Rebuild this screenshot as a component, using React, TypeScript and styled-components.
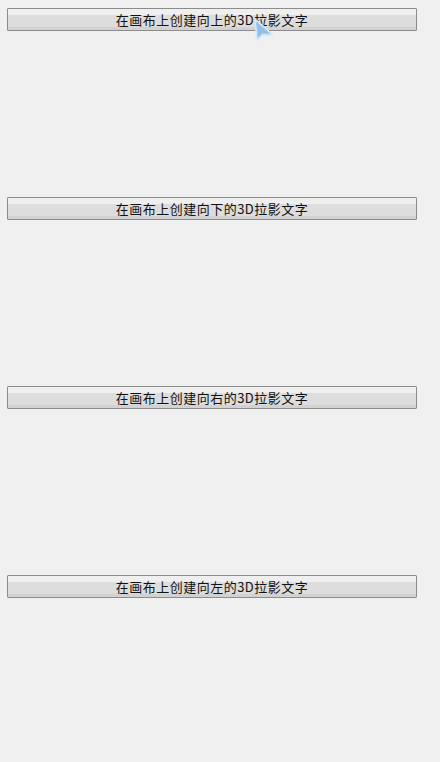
import React from "react";
import styled, { createGlobalStyle } from "styled-components";

const Global = createGlobalStyle`
  html, body { margin: 0; padding: 0; background: #f0f0f0; }
  body { font-family: "Noto Sans CJK SC", "Noto Sans", sans-serif; }
`;

const Page = styled.div`
  position: relative;
  width: 440px;
  height: 762px;
  padding: 8px 0 0 7px;
  box-sizing: border-box;
  display: flex;
  flex-direction: column;
  gap: 166px;
`;

const Button = styled.button`
  width: 410px;
  height: 23px;
  margin: 0;
  padding: 0;
  border: 1px solid #8c8c8c;
  border-radius: 1px;
  background: linear-gradient(
    to bottom,
    #efefef 0px,
    #efefef 6px,
    #dddddd 6px,
    #dddddd 18px,
    #d2d2d2 18px,
    #d2d2d2 21px
  );
  font-family: "Noto Sans CJK SC", "Noto Sans", sans-serif;
  font-size: 13px;
  font-weight: 400;
  line-height: 21px;
  color: #111;
  text-align: center;
  box-sizing: border-box;
  letter-spacing: 0.5px;
`;

const Cursor = styled.svg`
  position: absolute;
  left: 252px;
  top: 18px;
  z-index: 2;
`;

const labels = [
  "在画布上创建向上的3D拉影文字",
  "在画布上创建向下的3D拉影文字",
  "在画布上创建向右的3D拉影文字",
  "在画布上创建向左的3D拉影文字",
];

export default function App() {
  return (
    <>
      <Global />
      <Page>
        {labels.map((l) => (
          <Button key={l}>{l}</Button>
        ))}
        <Cursor width="24" height="26" viewBox="0 0 24 26">
          <path
            d="M4 3 L5.5 21 L10 16.5 L19.5 16.5 Z"
            fill="#d6e9fa"
            stroke="#d6e9fa"
            strokeWidth="3"
            strokeLinejoin="round"
          />
          <path
            d="M4.5 4 L6 19.5 L10.3 15.5 L18 15.8 Z"
            fill="#8fc0ec"
            stroke="#9fcaf0"
            strokeWidth="1"
            strokeLinejoin="round"
          />
        </Cursor>
      </Page>
    </>
  );
}
